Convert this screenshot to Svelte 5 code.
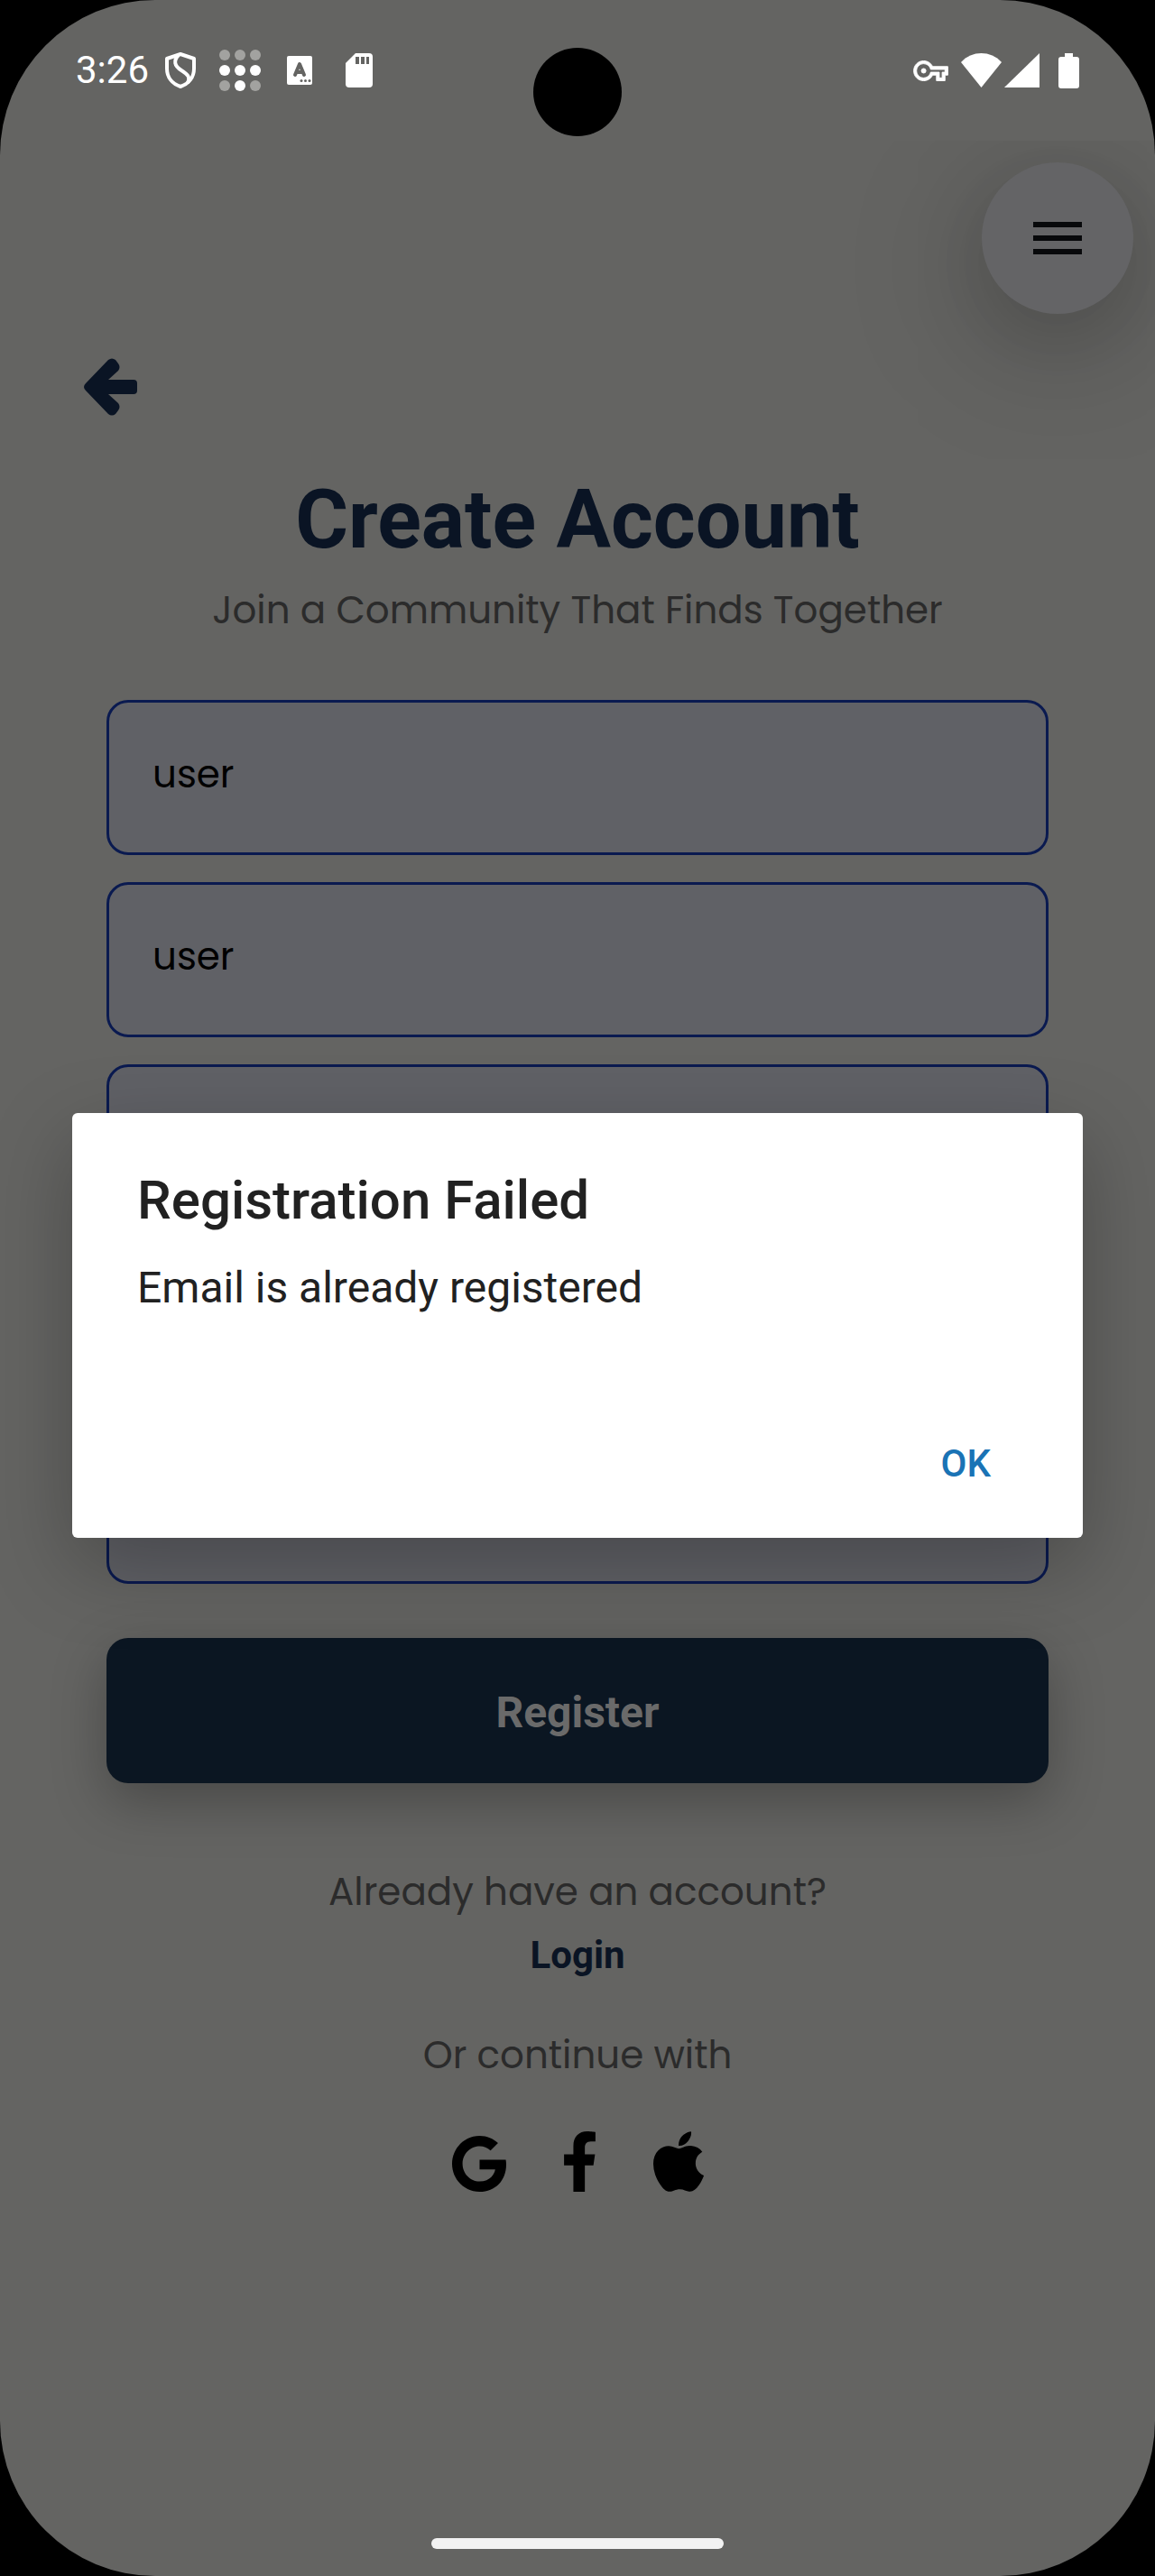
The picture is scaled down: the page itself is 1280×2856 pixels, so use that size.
<script>
  let fields = $state([
    { name: 'first-name', label: 'First name', type: 'text', value: 'user' },
    { name: 'last-name', label: 'Last name', type: 'text', value: 'user' },
    { name: 'email', label: 'Email', type: 'email', value: '' },
    { name: 'password', label: 'Password', type: 'password', value: '' },
    { name: 'confirm', label: 'Confirm password', type: 'password', value: '' }
  ]);
  let alertOpen = $state(true);

  const dots = [0, 1, 2, 3, 4, 5, 6, 7, 8].map((i) => ({
    x: 6 + (i % 3) * 17,
    y: 6 + Math.floor(i / 3) * 17,
    lit: [3, 4, 5, 7].includes(i)
  }));
</script>

<div class="phone">
  <header class="status">
    <div class="status-left">
      <span class="time">3:26</span>
      <span class="slot">
        <svg width="34" height="40" viewBox="0 0 34 40" fill="none" stroke="#fff" stroke-width="4" stroke-linejoin="round">
          <path d="M17 2 L32 7 V18 C32 28 26 35 17 38 C8 35 2 28 2 18 V7 Z" />
          <path d="M15 3 C9 9 10 15 18 20 C26 25 28 28 25 34" />
        </svg>
      </span>
      <span class="slot">
        <svg width="46" height="46" viewBox="0 0 46 46">
          {#each dots as d}
            <circle cx={d.x} cy={d.y} r="6" fill={d.lit ? '#ffffff' : '#a2a2a0'} />
          {/each}
        </svg>
      </span>
      <span class="slot">
        <svg width="28" height="32" viewBox="0 0 28 32">
          <rect width="28" height="32" rx="2" fill="#fff" />
          <path d="M9 21 L14 9 L19 21 M11 18 H17" fill="none" stroke="#646462" stroke-width="4" stroke-linecap="round" stroke-linejoin="round" />
          <g fill="#646462">
            <circle cx="16" cy="27.500" r="1.500" />
            <circle cx="20.500" cy="27.500" r="1.500" />
            <circle cx="25" cy="27.500" r="1.500" />
          </g>
        </svg>
      </span>
      <span class="slot">
        <svg width="30" height="38" viewBox="0 0 30 38">
          <path d="M11 0 H26 Q30 0 30 4 V34 Q30 38 26 38 H4 Q0 38 0 34 V11 Z" fill="#fff" />
          <path d="M11 4h4v8h-4z M17 4h4v8h-4z M23 4h3v8h-3z" fill="#646462" />
        </svg>
      </span>
    </div>
    <div class="status-right">
      <svg width="39" height="23" viewBox="-0.300 4.700 24.600 14.600" fill="#fff" stroke="#fff" stroke-width="0.600">
        <path d="M22 19h-6v-4h-2.700c-1.100 2.400-3.500 4-6.300 4-3.900 0-7-3.100-7-7s3.100-7 7-7c2.700 0 5.200 1.600 6.300 4H24v6h-2v4zm-4-2h2v-4h2v-2H11.900l-.2-.7C11 8.300 9.100 7 7 7c-2.800 0-5 2.200-5 5s2.200 5 5 5c2.100 0 4-1.300 4.700-3.300l.2-.7H18v4z" />
        <circle cx="7" cy="12" r="1.600" />
      </svg>
      <svg class="wifi" width="45" height="38" viewBox="0 0 45 38">
        <path d="M22.500 38 L0 10 C12 -3.300 33 -3.300 45 10 Z" fill="#fff" />
      </svg>
      <svg width="39" height="38" viewBox="0 0 39 38"><path d="M39 0 V38 H0 Z" fill="#fff" /></svg>
      <svg class="battery" width="23" height="39" viewBox="0 0 23 39">
        <path d="M7 0 H16 V4 H20 Q23 4 23 7 V36 Q23 39 20 39 H3 Q0 39 0 36 V7 Q0 4 3 4 H7 Z" fill="#fff" />
      </svg>
    </div>
    <span class="camera"></span>
  </header>

  <main>
    <button class="menu" type="button" aria-label="Menu">
      <svg width="54" height="36" viewBox="0 0 54 36" fill="#08090b">
        <path d="M0 0h54v6H0z M0 15h54v6H0z M0 30h54v6H0z" />
      </svg>
    </button>

    <button class="back" type="button" aria-label="Back">
      <svg width="59" height="64" viewBox="0 0 59 64" fill="#0a1424">
        <path d="M2 28 L27 2 Q31 -1 35 2 L38 6 Q41 10 38 14 L27 24 H55 Q59 24 59 28 V36 Q59 40 55 40 H27 L38 50 Q41 54 38 58 L35 62 Q31 65 27 62 L2 36 Q-2 32 2 28 Z" />
      </svg>
    </button>

    <h1>Create Account</h1>
    <p class="note sub">Join a Community That Finds Together</p>

    <form onsubmit={(e) => { e.preventDefault(); alertOpen = true; }}>
      {#each fields as f}
        <input name={f.name} type={f.type} aria-label={f.label} bind:value={f.value} />
      {/each}
      <button class="register" type="submit">Register</button>
    </form>

    <p class="note have">Already have an account?</p>
    <a class="login" href="#login">Login</a>
    <p class="note or">Or continue with</p>

    <div class="social">
      <button type="button" aria-label="Google">
        <svg width="60" height="62" viewBox="0 8 488 496" preserveAspectRatio="none">
          <path d="M488 261.800C488 403.300 391.100 504 248 504 110.800 504 0 393.200 0 256S110.800 8 248 8c66.800 0 123 24.500 166.300 64.900l-67.500 64.900C258.500 52.600 94.300 116.600 94.300 256c0 86.500 69.100 156.600 153.700 156.600 98.200 0 135-70.400 140.800-106.900H248v-85.300h236.100c2.300 12.700 3.900 24.900 3.900 41.400z" />
        </svg>
      </button>
      <button type="button" aria-label="Facebook">
        <svg width="35" height="67" viewBox="22 0 276 512" preserveAspectRatio="none">
          <path d="M279.140 288l14.220-92.660h-88.910v-60.130c0-25.350 12.420-50.060 52.240-50.060h40.420V6.260S260.430 0 225.360 0c-73.220 0-121.080 44.380-121.080 124.720v70.620H22.890V288h81.390v224h100.170V288z" />
        </svg>
      </button>
      <button type="button" aria-label="Apple">
        <svg width="56" height="67" viewBox="4 32 376 448">
          <path d="M318.700 268.700c-.2-36.700 16.400-64.400 50-84.800-18.800-26.900-47.200-41.700-84.700-44.600-35.500-2.800-74.300 20.700-88.500 20.700-15 0-49.400-19.700-76.400-19.700C63.300 141.200 4 184.800 4 273.500q0 39.300 14.400 81.200c12.800 36.700 59 126.700 107.200 125.200 25.200-.6 43-17.900 75.800-17.900 31.800 0 48.300 17.900 76.400 17.900 48.600-.7 90.400-82.500 102.600-119.300-65.200-30.700-61.700-90-61.700-91.900zm-56.600-164.200c27.300-32.400 24.800-61.900 24-72.500-24.100 1.400-52 16.400-67.900 34.900-17.500 19.800-27.800 44.300-25.600 71.900 26.100 2 49.900-11.400 69.500-34.300z" />
        </svg>
      </button>
    </div>
  </main>

  <footer><span class="handle"></span></footer>

  {#if alertOpen}
    <div class="overlay">
      <div class="dialog" role="alertdialog" aria-labelledby="alert-title" aria-describedby="alert-text">
        <h2 id="alert-title">Registration Failed</h2>
        <p id="alert-text">Email is already registered</p>
        <button type="button" onclick={() => (alertOpen = false)}>OK</button>
      </div>
    </div>
  {/if}
</div>

<style>
  :global(body) {
    background: #000;
  }

  .phone {
    position: relative;
    display: flex;
    flex-direction: column;
    min-height: 100vh;
    overflow: hidden;
    border-radius: 172px;
    background: #646462;
    font-family: Roboto, sans-serif;
  }

  svg {
    display: block;
  }

  button {
    padding: 0;
    border: 0;
    background: none;
    font-family: inherit;
    cursor: pointer;
  }

  h1,
  h2,
  p {
    margin: 0;
  }

  .status {
    position: relative;
    display: flex;
    align-items: center;
    justify-content: space-between;
    height: 156px;
    padding: 0 84px;
    color: #fff;
  }

  .status-left,
  .status-right {
    display: flex;
    align-items: center;
  }

  .time {
    margin-right: 2px;
    font-size: 42px;
    line-height: 60px;
  }

  .slot {
    display: flex;
    justify-content: center;
    width: 66px;
  }

  .wifi {
    margin: 0 3px 0 14px;
  }

  .battery {
    margin-left: 21px;
  }

  .camera {
    position: absolute;
    top: 53px;
    left: 50%;
    width: 98px;
    height: 98px;
    margin-left: -49px;
    border-radius: 50%;
    background: #000;
  }

  main {
    position: relative;
    display: flex;
    flex-direction: column;
    align-items: center;
    padding: 237px 118px 48px;
    overflow: hidden;
  }

  .menu {
    position: absolute;
    top: 24px;
    right: 24px;
    display: grid;
    place-items: center;
    width: 168px;
    height: 168px;
    border-radius: 50%;
    background: #646466;
    box-shadow:
      0 24px 60px rgba(0, 0, 0, 0.06),
      0 30px 150px rgba(0, 0, 0, 0.28);
  }

  .back {
    display: flex;
    align-items: center;
    align-self: flex-start;
    height: 72px;
    margin-left: -25px;
  }

  h1 {
    margin-top: 60px;
    color: #0a1424;
    font-size: 90px;
    font-weight: 700;
    line-height: 104px;
  }

  .note {
    color: #2b2b2b;
    font-family: Poppins, 'Open Sans', sans-serif;
    font-size: 42px;
    line-height: 60px;
  }

  .sub {
    margin-top: 18px;
  }

  form {
    display: flex;
    flex-direction: column;
    gap: 30px;
    width: 100%;
    margin-top: 69px;
  }

  input {
    box-sizing: border-box;
    width: 100%;
    height: 172px;
    padding: 0 48px 8px;
    border: 3px solid #0a1a50;
    border-radius: 24px;
    outline: 0;
    background: #606166;
    color: #000;
    font-family: Poppins, 'Open Sans', sans-serif;
    font-size: 42px;
  }

  .register {
    height: 161px;
    margin-top: 30px;
    padding-top: 4px;
    border-radius: 24px;
    background: #0b1622;
    box-shadow: 0 20px 60px rgba(0, 0, 0, 0.28);
    color: #6a6a6a;
    font-size: 48px;
    font-weight: 700;
  }

  .have {
    margin-top: 91px;
  }

  .login {
    margin-top: 10px;
    color: #0a1424;
    font-size: 42px;
    font-weight: 700;
    line-height: 60px;
    text-decoration: none;
  }

  .or {
    margin-top: 51px;
  }

  .social {
    display: flex;
    align-items: flex-end;
    gap: 64px;
    margin-top: 54px;
  }

  footer {
    display: flex;
    justify-content: center;
    margin-top: auto;
    padding-bottom: 30px;
  }

  .handle {
    width: 324px;
    height: 12px;
    border-radius: 6px;
    background: #f2f2f2;
  }

  .overlay {
    position: absolute;
    inset: 0;
    display: flex;
    align-items: center;
    padding: 156px 80px 74px;
  }

  .dialog {
    display: flex;
    flex: 1;
    flex-direction: column;
    padding: 61px 54px 28px 72px;
    border-radius: 6px;
    background: #fff;
    box-shadow: 0 30px 90px rgba(0, 0, 0, 0.26);
    color: #212121;
  }

  h2 {
    font-size: 60px;
    font-weight: 500;
    line-height: 72px;
  }

  .dialog p {
    margin-top: 31px;
    font-size: 48px;
    line-height: 60px;
  }

  .dialog button {
    align-self: flex-end;
    height: 108px;
    margin-top: 111px;
    padding: 0 48px;
    color: #1a73b5;
    font-size: 42px;
    font-weight: 500;
  }
</style>
